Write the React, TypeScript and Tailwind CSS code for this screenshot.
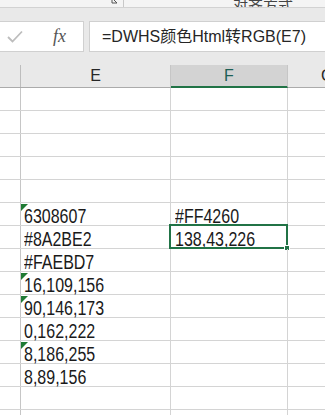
import React from 'react';

const cellFont = { fontFamily: '"Liberation Sans", Arial, sans-serif' };

type Cell = { e?: string; f?: string; mark?: boolean; selected?: boolean };

const rows: Cell[] = [
  {}, {}, {}, {}, {},
  { e: '6308607', f: '#FF4260', mark: true },
  { e: '#8A2BE2', f: '138,43,226', selected: true },
  { e: '#FAEBD7' },
  { e: '16,109,156', mark: true },
  { e: '90,146,173', mark: true },
  { e: '0,162,222' },
  { e: '8,186,255', mark: true },
  { e: '8,89,156' },
  {}, {},
];

// cell font is tall and narrow (like DengXian), so stretch Arial vertically
const CellText = ({ text }: { text?: string }) =>
  text ? <span className="inline-block origin-bottom-left scale-y-[1.22]">{text}</span> : null;

const GridRow = ({ e, f, mark, selected }: Cell) => (
  <div className="flex h-[23px] shrink-0 border-b border-[#d4d4d4]">
    <div className="w-[21px] shrink-0 border-r border-[#c6c6c6] bg-white" />
    <div className="relative flex w-[150px] shrink-0 items-end border-r border-[#d4d4d4] pl-[3px] text-[16px] leading-[15px] text-[#1a1a1a]" style={cellFont}>
      {mark && (
        <div className="absolute left-0 top-[1px] h-0 w-0 border-r-[7px] border-t-[7px] border-r-transparent border-t-[#1f7a33]" />
      )}
      <CellText text={e} />
    </div>
    <div className="relative flex w-[117px] shrink-0 items-end border-r border-[#d4d4d4] pl-[4px] text-[16px] leading-[15px] text-[#1a1a1a]" style={cellFont}>
      <CellText text={f} />
      {selected && (
        <div className="absolute -left-[2px] -top-[2px] -right-[1px] -bottom-[1px] border-2 border-[#217346]">
          <div className="absolute -bottom-[4px] -right-[4px] h-[6px] w-[6px] border border-white bg-[#217346]" />
        </div>
      )}
    </div>
    <div className="flex-1" />
  </div>
);

export default function App() {
  return (
    <div className="flex h-[415px] w-[325px] flex-col overflow-hidden bg-white" style={{ fontFamily: '"Liberation Sans", "Noto Sans CJK SC", sans-serif' }}>
      {/* ribbon bottom edge */}
      <div className="relative flex h-[8px] shrink-0 items-end overflow-hidden border-b border-[#d2d2d2] bg-[#f4f4f4]">
        <svg className="ml-[111px] mb-[2px]" width="8" height="6" viewBox="0 0 8 6">
          <path d="M1 0 V4 H6" stroke="#555" strokeWidth="1" fill="none" />
          <path d="M3 1 L6 4" stroke="#555" strokeWidth="1" />
        </svg>
        <div className="ml-[4px] h-full w-px bg-[#c8c8c8]" />
        <div className="ml-[109px] mb-[-5px] whitespace-nowrap text-[15px] leading-[15px] text-[#444]" style={{ fontFamily: '"Noto Sans CJK SC", sans-serif' }}>
          对齐方式
        </div>
      </div>
      <div className="h-[13px] shrink-0 bg-[#e9e9e9]" />
      {/* formula bar */}
      <div className="flex h-[31px] shrink-0 gap-[5px] bg-[#e9e9e9]">
        <div className="flex w-[84px] items-center border border-l-0 border-[#d0d0d0] bg-white">
          <svg className="ml-[7px]" width="16" height="13" viewBox="0 0 16 13">
            <path d="M1 7 L5.5 11.5 L15 1.5" stroke="#bdbdbd" strokeWidth="1.8" fill="none" />
          </svg>
          <span className="ml-[30px] text-[18px] italic text-[#555]" style={{ fontFamily: '"Liberation Serif", serif' }}>
            fx
          </span>
        </div>
        <div className="flex flex-1 items-center border border-r-0 border-[#d0d0d0] bg-white pl-[12px] text-[16px] text-[#262626]">
          =DWHS颜色Html转RGB(E7)
        </div>
      </div>
      <div className="h-[13px] shrink-0 bg-[#e9e9e9]" />
      {/* column headers */}
      <div className="flex h-[23px] shrink-0 border-b border-[#ababab] bg-[#e9e9e9] text-[16px]">
        <div className="w-[21px] shrink-0 border-r border-[#bdbdbd]" />
        <div className="flex w-[150px] shrink-0 items-center justify-center border-r border-[#c6c6c6] text-[#262626]">E</div>
        <div className="-mb-px flex w-[117px] shrink-0 items-center justify-center border-b-2 border-r border-b-[#217346] border-r-[#c6c6c6] bg-[#d3d3d3] text-[#1d5f55]">
          F
        </div>
        <div className="flex flex-1 items-center pl-[33px] text-[#262626]">G</div>
      </div>
      {rows.map((r, i) => (
        <GridRow key={i} {...r} />
      ))}
    </div>
  );
}
